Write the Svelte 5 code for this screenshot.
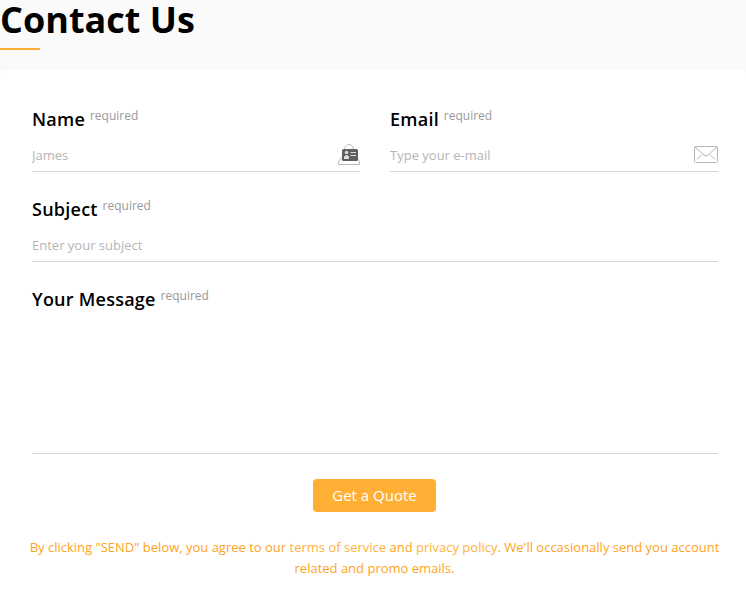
<script lang="ts">
	let name = $state('');
	let email = $state('');
	let subject = $state('');
	let message = $state('');
</script>

<section class="contact">
	<header>
		<h1>Contact Us</h1>
	</header>

	<form>
		<div class="grid">
			<div class="field">
				<label for="name">Name <sup>required</sup></label>
				<div class="control">
					<input id="name" placeholder="James" bind:value={name} />
					<svg width="22" height="22" viewBox="0 0 22 22" fill="none">
						<path
							d="M6.500 8V5.500a4.500 5 0 0 1 9 0V8M4.500 13.500l-2.500 1.500-1.500 3v2.500h21V18L20 15l-1.500-1.500"
							stroke="#bbb"
						/>
						<rect x="4" y="5" width="16" height="12" rx="1.500" fill="#606060" />
						<circle cx="8.500" cy="8.500" r="1.700" fill="#ddd" />
						<path d="M6 15v-2.500q2.500-3 5 0V15z" fill="#ddd" />
						<path d="M12.500 8.500H18M12.500 11.500H18" stroke="#ddd" />
					</svg>
				</div>
			</div>
			<div class="field">
				<label for="email">Email <sup>required</sup></label>
				<div class="control">
					<input id="email" type="email" placeholder="Type your e-mail" bind:value={email} />
					<svg class="mail" width="24" height="17" viewBox="0 0 24 17" fill="none" stroke="#b5b5b5">
						<rect x=".5" y=".5" width="23" height="16" rx="1" />
						<path d="M1 1l9 8q2 2 4 0l9-8M3 13.500l5-5M21 13.500l-5-5" />
					</svg>
				</div>
			</div>
			<div class="field wide">
				<label for="subject">Subject <sup>required</sup></label>
				<div class="control">
					<input id="subject" placeholder="Enter your subject" bind:value={subject} />
				</div>
			</div>
			<div class="field message">
				<label for="message">Your Message <sup>required</sup></label>
				<div class="control">
					<textarea id="message" bind:value={message}></textarea>
				</div>
			</div>
		</div>

		<button type="submit">Get a Quote</button>

		<p class="terms">
			By clicking "SEND" below, you agree to our <a href="#terms">terms of service</a> and
			<a href="#privacy">privacy policy</a>. We'll occasionally send you account related and promo emails.
		</p>
	</form>
</section>

<style>
	:global(body) {
		background: #fafafa;
	}
	.contact {
		font-family: 'Open Sans', sans-serif;
		color: #000;
	}
	header {
		height: 70px;
	}
	h1 {
		margin: 0;
		font-size: 36px;
		line-height: 40px;
		font-weight: 700;
	}
	h1::after {
		content: '';
		display: block;
		width: 40px;
		height: 2px;
		margin-top: 8px;
		background: #ffaf33;
	}
	form {
		display: flex;
		flex-direction: column;
		align-items: center;
		box-sizing: border-box;
		min-height: 544px;
		padding: 32px 23px 0 26px;
		border-radius: 5px 5px 0 0;
		background: #fff;
	}
	.grid {
		display: grid;
		grid-template-columns: 1fr 1fr;
		column-gap: 30px;
		box-sizing: border-box;
		width: 100%;
		padding: 0 5px 0 6px;
	}
	.field {
		box-sizing: border-box;
		height: 90px;
		padding-top: 4px;
	}
	.wide,
	.message {
		grid-column: 1 / -1;
	}
	.message {
		height: auto;
	}
	label {
		display: block;
		height: 26px;
		font-size: 18px;
		line-height: 26px;
		font-weight: 600;
		letter-spacing: 0.24px;
	}
	sup {
		position: relative;
		top: 1px;
		font-size: 12px;
		line-height: 0;
		font-weight: 400;
		letter-spacing: 0;
		color: #999;
	}
	.control {
		display: flex;
		align-items: center;
		box-sizing: border-box;
		height: 40px;
		padding-top: 7px;
		border-bottom: 1px solid #d5d5d5;
	}
	.message .control {
		height: 142px;
	}
	.mail {
		margin-bottom: 2px;
	}
	input,
	textarea {
		flex: 1;
		min-width: 0;
		height: 100%;
		box-sizing: border-box;
		padding: 0;
		border: 0;
		outline: 0;
		background: none;
		font: 13px 'Open Sans', sans-serif;
		resize: none;
	}
	input::placeholder {
		color: #b5b5b5;
	}
	button {
		margin-top: 25px;
		width: 123px;
		height: 33px;
		padding: 0 0 2px;
		border: 0;
		border-radius: 4px;
		background: #ffaf33;
		color: #fff;
		font: 15px 'Open Sans', sans-serif;
	}
	.terms {
		margin: 25px 0 0;
		font-size: 13px;
		line-height: 21px;
		text-align: center;
		color: #ffa31a;
	}
	.terms a {
		color: #ffb13d;
		text-decoration: none;
	}
</style>
